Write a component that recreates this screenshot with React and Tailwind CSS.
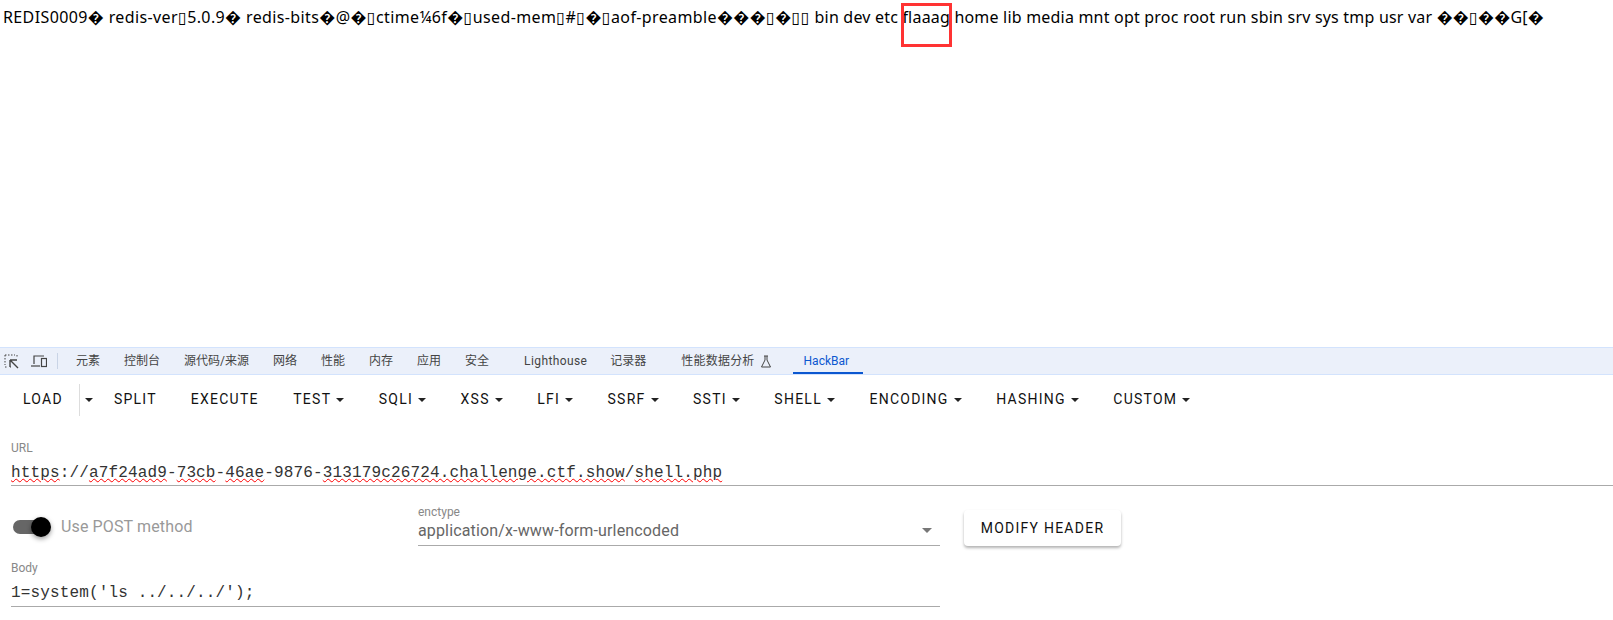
const devtoolsTabs = [
  { label: '元素', cls: 'ml-[18px]' },
  { label: '控制台', cls: 'ml-6' },
  { label: '源代码/来源', cls: 'ml-6' },
  { label: '网络', cls: 'ml-6' },
  { label: '性能', cls: 'ml-6' },
  { label: '内存', cls: 'ml-6' },
  { label: '应用', cls: 'ml-6' },
  { label: '安全', cls: 'ml-6' },
  { label: 'Lighthouse', cls: 'ml-[35px] tracking-[0.4px]' },
  { label: '记录器', cls: 'ml-[23px]' },
  { label: '性能数据分析', cls: 'ml-[35px] tracking-[0.2px]' },
];

const menus = ['TEST', 'SQLI', 'XSS', 'LFI', 'SSRF', 'SSTI', 'SHELL', 'ENCODING', 'HASHING', 'CUSTOM'];

function Caret({ className }) {
  return <span className={`inline-block w-0 h-0 border-x-4 border-x-transparent border-t-4 ${className}`} />;
}

function ToolButton({ children }) {
  return (
    <button className="h-9 px-4 flex items-center text-[14px] font-normal tracking-[1.25px] text-[#111]">
      {children}
    </button>
  );
}

function Squiggle({ children }) {
  return <span className="underline decoration-wavy decoration-[#f00] decoration-1 underline-offset-[1px]">{children}</span>;
}

function FieldLabel({ children }) {
  return <div className="text-[12px] leading-4 text-[#888]">{children}</div>;
}

export default function App() {
  return (
    <div className="w-[1613px] h-[620px] bg-white overflow-hidden font-['Roboto','Noto_Sans_CJK_SC',sans-serif]">
      {/* page output */}
      <div className="relative h-[347px] pl-[3px] pt-[8px] font-['Noto_Sans','DejaVu_Sans',sans-serif] text-[16px] leading-[18px] text-black whitespace-nowrap">
        <span className="tracking-[0.38px]">REDIS0009� redis-ver▯5.0.9� redis-bits�@�▯ctime¼6f�▯used-mem▯#▯�▯aof-preamble���▯�▯▯ </span>
        <span className="tracking-[0.2px]">bin dev etc flaaag home lib media mnt opt proc root run sbin srv sys tmp usr var ��▯��G[�</span>
        <div className="absolute left-[901px] top-[3px] w-[51px] h-[44px] border-[3px] border-[#f33]" />
      </div>

      {/* devtools tab bar */}
      <div className="h-[28px] flex items-center bg-[#ebf0fa] border-y border-[#d3e3fd] text-[12px] text-[#444]">
        <svg className="ml-[4px]" width="15" height="15" viewBox="0 0 15 15" fill="none" stroke="#444">
          <path d="M1 1h10M1 1v10M1 13h3M6 13h1M13 1v3" strokeDasharray="1.5 1.5" />
          <path d="M6 6h7M6 6v7M6 6l8 8" strokeWidth="1.4" />
        </svg>
        <svg className="ml-[12px]" width="16" height="14" viewBox="0 0 16 14" fill="none" stroke="#444" strokeWidth="1.2">
          <path d="M3 10V2h10" />
          <path d="M0 12h9" />
          <rect x="10.5" y="4.5" width="5" height="8" />
        </svg>
        <div className="ml-[10px] w-px h-4 bg-[#c9d4e6]" />
        {devtoolsTabs.map((t) => (
          <span key={t.label} className={t.cls}>{t.label}</span>
        ))}
        <svg className="ml-[5px]" width="12" height="13" viewBox="0 0 12 13" fill="none" stroke="#444">
          <path d="M4 1h4M5 1v4L1.5 12h9L7 5V1" />
        </svg>
        <div className="ml-[21px] h-full pl-[11px] pr-[14px] flex items-center relative text-[#0b57d0]">
          HackBar
          <div className="absolute left-0 right-0 bottom-0 h-[2px] bg-[#0b57d0]" />
        </div>
      </div>

      {/* hackbar toolbar */}
      <div className="h-[49px] pl-[7px] flex items-center">
        <ToolButton>LOAD</ToolButton>
        <div className="w-px h-8 bg-[#ddd]" />
        <button className="w-[18px] h-9 flex items-center justify-center">
          <Caret className="border-t-[#222]" />
        </button>
        <ToolButton>SPLIT</ToolButton>
        <div className="w-[2px]" />
        <ToolButton>EXECUTE</ToolButton>
        {menus.map((m) => (
          <div key={m} className="ml-[2.5px]">
            <ToolButton>
              {m}
              <Caret className="ml-[5px] border-t-[#222]" />
            </ToolButton>
          </div>
        ))}
      </div>

      {/* url */}
      <div className="ml-[11px] pt-[16px]">
        <FieldLabel>URL</FieldLabel>
        <div className="h-[30px] pt-[7px] border-b border-[#aaa] font-['Liberation_Mono',monospace] text-[16px] leading-[20px] tracking-[0.14px] text-[#333]">
          <Squiggle>https</Squiggle>://<Squiggle>a7f24ad9</Squiggle>-<Squiggle>73cb</Squiggle>-<Squiggle>46ae</Squiggle>-9876-<Squiggle>313179c26724.challenge.ctf.show</Squiggle>/<Squiggle>shell.php</Squiggle>
        </div>
      </div>

      {/* post toggle, enctype, header button */}
      <div className="mx-[11px] mt-[18px] h-[50px] flex">
        <div className="w-[407px] flex items-center pb-[4px]">
          <div className="relative w-[34px] h-[14px] ml-[2px] rounded-full bg-[#666]">
            <div className="absolute -right-[4px] -top-[3px] w-5 h-5 rounded-full bg-black shadow-[0_2px_5px_rgba(0,0,0,0.4)]" />
          </div>
          <span className="ml-[14px] text-[16px] tracking-[0.13px] text-[#999]">Use POST method</span>
        </div>
        <div className="w-[522px]">
          <FieldLabel>enctype</FieldLabel>
          <div className="h-[26px] pb-[4px] flex items-center justify-between border-b border-[#aaa] text-[16px] tracking-[0.15px] text-[#666] pr-[8px]">
            application/x-www-form-urlencoded
            <Caret className="border-t-[#777] border-t-[5px] border-x-[5px]" />
          </div>
        </div>
        <button className="ml-6 mt-[6px] w-[157px] h-9 rounded bg-white shadow-[0_2px_3px_rgba(0,0,0,0.3)] text-[14px] font-normal tracking-[1.25px] text-[#111]">
          MODIFY HEADER
        </button>
      </div>

      {/* body */}
      <div className="ml-[11px] w-[929px] mt-[6px]">
        <FieldLabel>Body</FieldLabel>
        <div className="h-[31px] pt-[7px] border-b border-[#aaa] font-['Liberation_Mono',monospace] text-[16px] leading-[20px] tracking-[0.14px] text-[#333]">
          1=system('ls ../../../');
        </div>
      </div>
    </div>
  );
}
